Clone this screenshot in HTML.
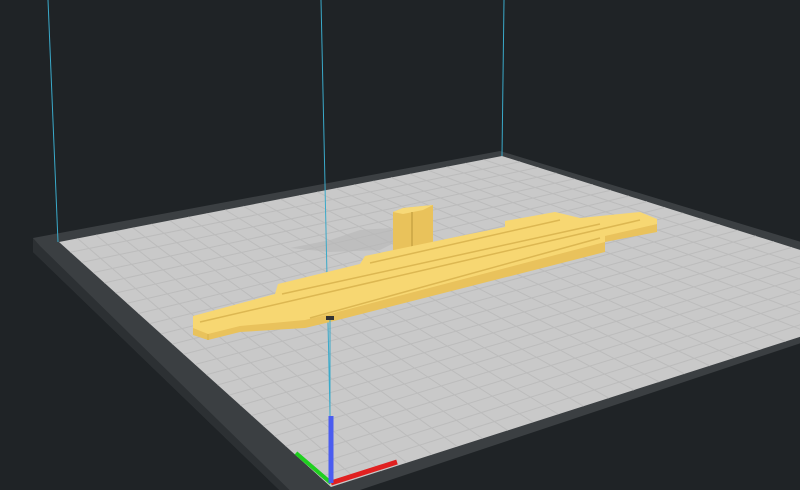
<!DOCTYPE html>
<html><head><meta charset="utf-8"><style>
html,body{margin:0;padding:0;background:#1f2326;width:800px;height:490px;overflow:hidden}
svg{display:block}
</style></head><body>
<svg id="s" width="800" height="490" viewBox="0 0 800 490" xmlns="http://www.w3.org/2000/svg">
<rect width="800" height="490" fill="#1f2326"/>
<polygon points="33,238 500,151 960,290 300,510 33,252" fill="#3b3f42"/>
<polygon points="33,238 33,252 300,510 310,510 40,246" fill="#2c3033"/>
<polygon id="plate" points="59,242 502,156 937,293 331,487" fill="#c9c9c9"/>
<g id="grid" stroke="#bcbcbc" stroke-width="1"></g>
<path d="M290,248 L330,240 L360,230 L390,228 L400,240 L380,250 L330,252 Z" fill="#b8b8b8" opacity="0.6"/>
<line x1="48" y1="0" x2="58" y2="242" stroke="#3aa9c9" stroke-width="1"/>
<line x1="321" y1="0" x2="330" y2="415" stroke="#3aa9c9" stroke-width="1"/>
<line x1="504" y1="0" x2="502" y2="156" stroke="#3aa9c9" stroke-width="1"/>
<!-- tower -->
<polygon points="393,212 403,208 433,205 433,248 405,256 393,255" fill="#e9c25b"/>
<polygon points="393,212 403,208 433,205 423,210 403,214" fill="#f7d978"/>
<line x1="412" y1="212" x2="412" y2="255" stroke="#c9a445" stroke-width="1.5"/>
<!-- object front faces -->
<polygon points="193,322 657,224 657,232 605,242 605,252 330,322 305,328 240,332 208,340 193,335" fill="#e9c25c"/>
<!-- top faces -->
<polygon points="193,316 275,294 278,284 360,264 365,256 470,234 505,227 505,221 555,212 580,218 640,212 657,219 657,224 605,236 605,242 330,314 305,320 240,326 208,334 193,328" fill="#f7d772"/>
<g stroke="#dcb752" stroke-width="1.5" fill="none">
<polyline points="200,322 640,220"/>
<polyline points="282,294 600,224"/>
<polyline points="310,318 600,238"/>
<polyline points="370,263 560,220"/>
<polyline points="208,334 208,340"/>
</g>
<rect x="326" y="316" width="8" height="4" fill="#333"/>
<line x1="330" y1="320" x2="330" y2="480" stroke="#3aa9c9" stroke-width="1"/>
<line x1="331" y1="483" x2="397" y2="462" stroke="#e02020" stroke-width="5"/>
<line x1="331" y1="483" x2="296" y2="453" stroke="#1fd01f" stroke-width="4"/>
<line x1="331" y1="483" x2="331" y2="416" stroke="#4a5cf0" stroke-width="5"/>
</svg>
<script>
var g=document.getElementById('grid');
var A=[59,242],B=[502,156],C=[937,293],D=[331,487],N=24;
function L(p,q,t){return [p[0]+(q[0]-p[0])*t,p[1]+(q[1]-p[1])*t];}
var h='';
for(var i=1;i<N;i++){var t=i/N;
var p=L(A,B,t),q=L(D,C,t);h+='<line x1="'+p[0]+'" y1="'+p[1]+'" x2="'+q[0]+'" y2="'+q[1]+'"/>';
p=L(A,D,t);q=L(B,C,t);h+='<line x1="'+p[0]+'" y1="'+p[1]+'" x2="'+q[0]+'" y2="'+q[1]+'"/>';}
g.innerHTML=h;
</script>
</body></html>
